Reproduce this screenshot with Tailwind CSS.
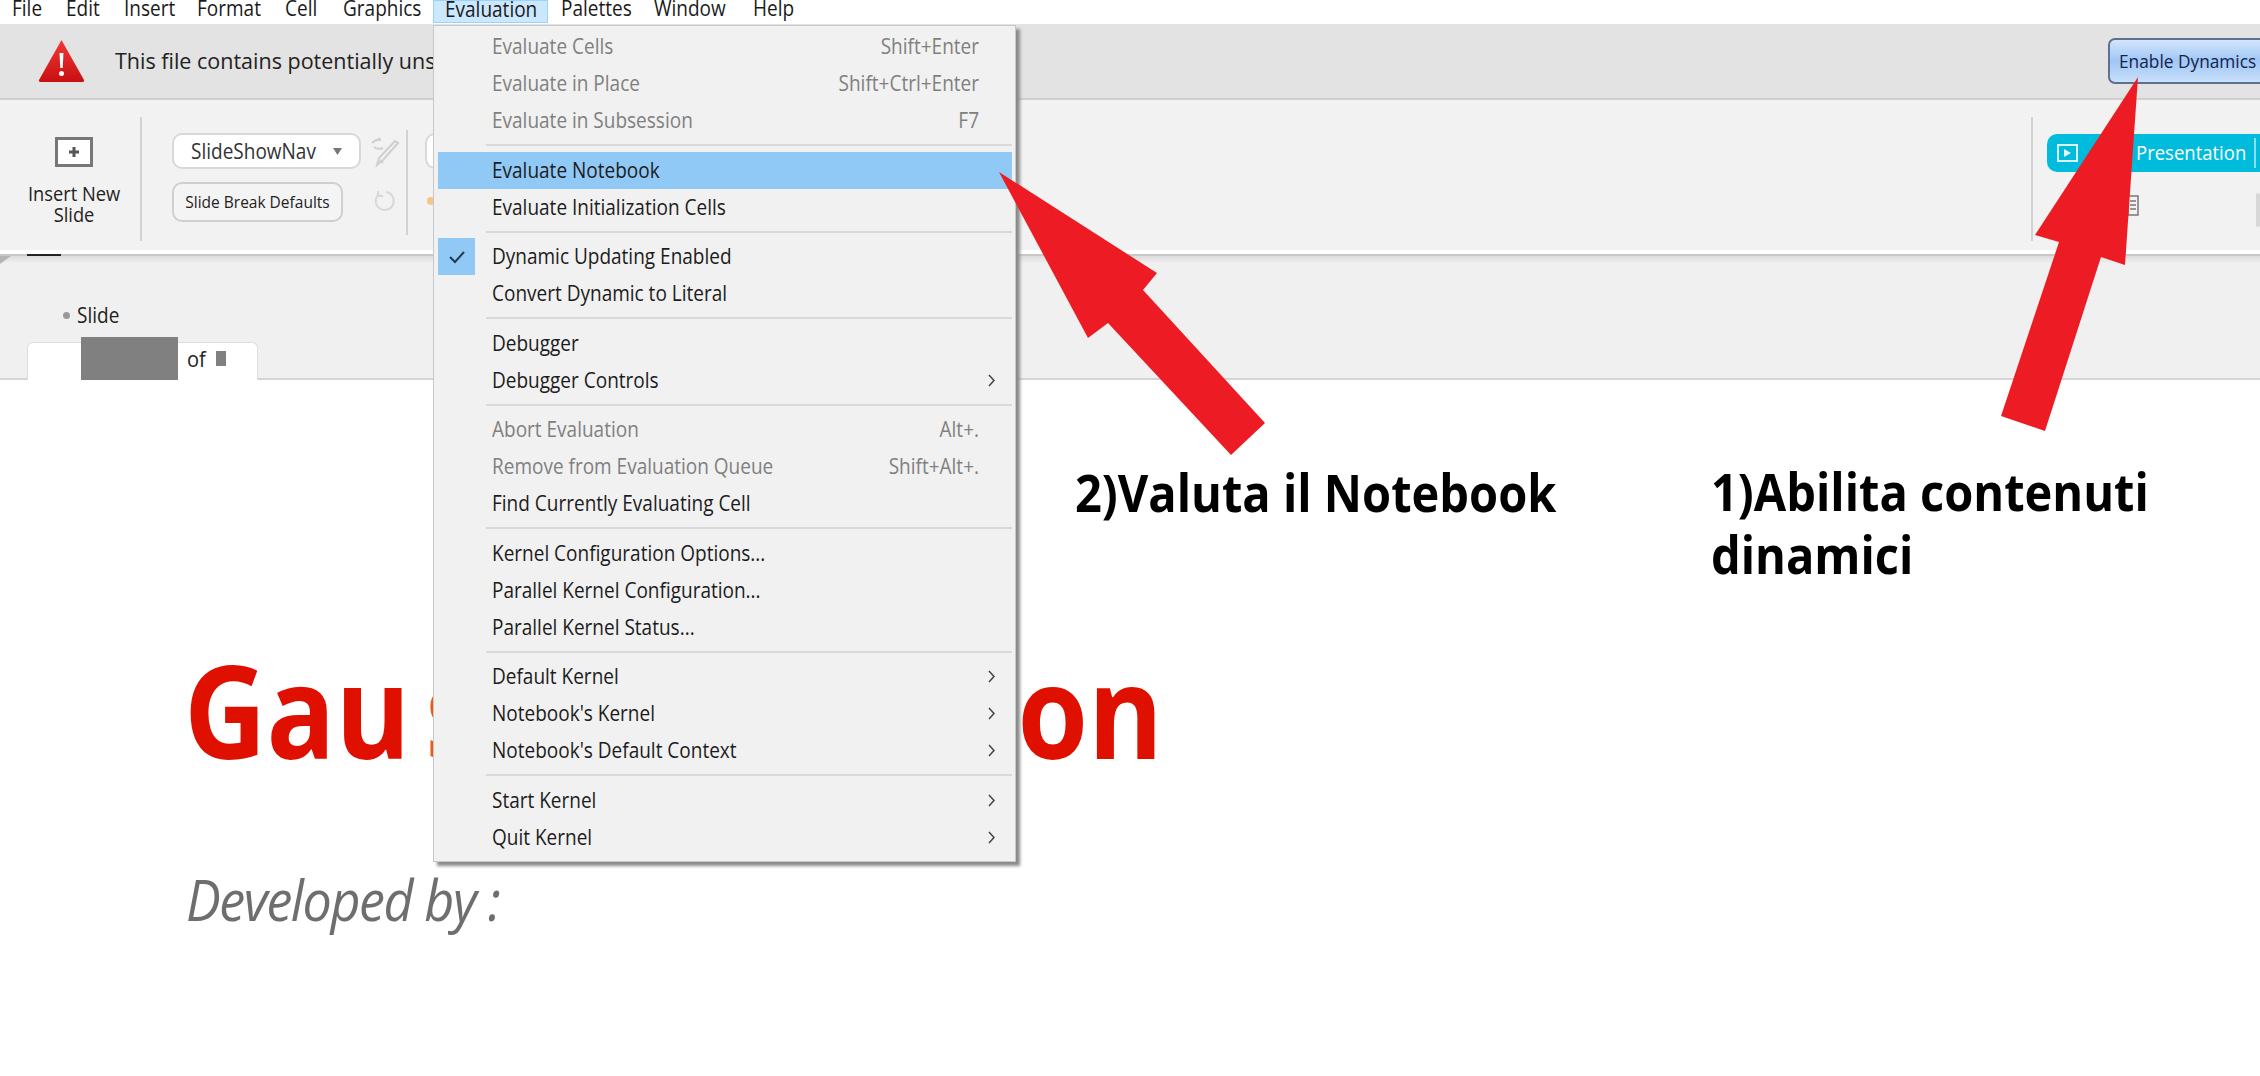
<!DOCTYPE html>
<html>
<head>
<meta charset="utf-8">
<script src="https://cdn.jsdelivr.net/npm/@tailwindcss/browser@4"></script>
</head>
<body class="bg-white">
<div class="relative w-[2260px] h-[1076px] overflow-hidden bg-white font-['Open_Sans',sans-serif] text-[#1a1a1a]">

  <!-- menu bar -->
  <div class="flex h-[24px] pl-[12px] overflow-hidden text-[19px] leading-none [&_span]:inline-block [&_span]:origin-bottom [&_span]:scale-y-[1.1]">
    <div class="w-[54px]"><span>File</span></div>
    <div class="w-[58px]"><span>Edit</span></div>
    <div class="w-[73px]"><span>Insert</span></div>
    <div class="w-[88px]"><span>Format</span></div>
    <div class="w-[58px]"><span>Cell</span></div>
    <div class="w-[90px]"><span>Graphics</span></div>
    <div class="w-[115px] h-[23px] pl-[11px] bg-[#cce8ff] border border-[#99d1ff]"><span>Evaluation</span></div>
    <div class="w-[106px] pl-[13px]"><span>Palettes</span></div>
    <div class="w-[99px]"><span>Window</span></div>
    <div><span>Help</span></div>
  </div>

  <!-- warning banner -->
  <div class="flex items-center h-[76px] pl-[38px] bg-[#e3e3e3] border-b-2 border-[#cfcfcf] overflow-hidden">
    <svg class="w-[47px] h-[44px] shrink-0" viewBox="0 0 47 44">
      <defs><linearGradient id="tri" x1="0" y1="0" x2="0" y2="1"><stop offset="0" stop-color="#f03a36"/><stop offset="1" stop-color="#c80f12"/></linearGradient></defs>
      <path d="M23.5 1 L46 41 Q46.5 43 44 43 L3 43 Q.5 43 1 41 Z" fill="url(#tri)"/>
      <path d="M21.5 14 h4 l-.8 15 h-2.4 Z" fill="#fff"/>
      <circle cx="23.5" cy="34.5" r="2.5" fill="#fff"/>
    </svg>
    <span class="ml-[30px] text-[21.5px] leading-none inline-block scale-y-[1.05] text-[#222]">This file contains potentially unsafe</span>
    <div class="ml-auto mr-[-20px] flex items-center w-[172px] h-[46px] pl-[9px] rounded-[7px] border-2 border-[#5f6f8f] bg-linear-to-b from-[#d3e6fc] via-[#9fc6f5] to-[#c9e0fa] shrink-0">
      <span class="text-[17.3px] leading-none whitespace-nowrap text-[#14234a] inline-block scale-y-[1.1]">Enable Dynamics</span>
    </div>
  </div>

  <!-- toolbar -->
  <div class="flex items-start h-[150px] bg-[#f2f2f2] overflow-hidden">
    <div class="w-[142px] mt-[17px] h-[124px] border-r-2 border-[#d2d2d2] flex flex-col items-center pl-[8px] shrink-0">
      <div class="mt-[20px] w-[38px] h-[30px] border-[3px] border-[#777] bg-white flex items-center justify-center">
        <svg class="w-[12px] h-[12px]" viewBox="0 0 12 12"><path d="M6 1v10M1 6h10" stroke="#555" stroke-width="3"/></svg>
      </div>
      <div class="mt-[15px] text-center text-[18.3px] leading-[21px] text-[#222] whitespace-nowrap [&_span]:inline-block [&_span]:scale-y-[1.1]"><span>Insert New</span><br><span>Slide</span></div>
    </div>
    <div class="ml-[30px] mt-[33px] flex flex-col shrink-0">
      <div class="flex items-center w-[189px] h-[36px] pl-[17px] bg-white border-2 border-[#d8d8d8] rounded-[10px]">
        <span class="text-[19px] leading-none text-[#333] inline-block scale-y-[1.1]">SlideShowNav</span>
        <svg class="ml-[17px] w-[9px] h-[7px]" viewBox="0 0 9 7"><path d="M0 0h9L4.500 7Z" fill="#777"/></svg>
      </div>
      <div class="flex items-center justify-center w-[171px] h-[40px] mt-[13px] bg-[#f4f4f4] border-2 border-[#cfcfcf] rounded-[10px]">
        <span class="text-[15.5px] leading-none text-[#222] whitespace-nowrap inline-block scale-y-[1.1]">Slide Break Defaults</span>
      </div>
    </div>
    <div class="ml-[9px] mt-[37px] w-[30px] flex flex-col items-center shrink-0">
      <svg class="w-[30px] h-[30px]" viewBox="0 0 30 30" fill="none" stroke="#cfcfcf" stroke-width="2"><path d="M28 6 L13 23 L7 28 L9 21 L25 4 Z"/><path d="M10 23 L13 26"/><path d="M2 6 q4-4 9-3 M11 3 l-3-2 M4 10 q4 3 9 1"/></svg>
      <svg class="mt-[23px] w-[22px] h-[22px]" viewBox="0 0 22 22" fill="none" stroke="#d8d8d8" stroke-width="2"><path d="M5 4 A9 9 0 1 0 12 2"/><path d="M4 1v5h5"/></svg>
    </div>
    <div class="ml-[6px] mt-[30px] h-[105px] w-[2px] bg-[#d2d2d2] shrink-0"></div>
    <div class="ml-[17px] mt-[33px] flex flex-col shrink-0">
      <div class="w-[60px] h-[36px] bg-white border-2 border-[#d8d8d8] rounded-[10px]"></div>
      <div class="ml-[2px] mt-[28px] w-[8px] h-[8px] rounded-full bg-[#f5c78a]"></div>
    </div>

    <div class="ml-auto mt-[17px] h-[124px] w-[2px] bg-[#d2d2d2] shrink-0"></div>
    <div class="ml-[14px] mt-[34px] w-[213px] shrink-0">
      <div class="flex items-center h-[38px] pl-[10px] bg-[#00bcdc] rounded-l-[10px]">
        <svg class="w-[21px] h-[18px] shrink-0" viewBox="0 0 21 18" fill="none"><rect x="1" y="1" width="19" height="16" stroke="#d8f4fa" stroke-width="2"/><path d="M7 5l7 4-7 4Z" fill="#e8f9fc"/></svg>
        <span class="ml-[58px] -translate-y-[1px] text-[18.5px] leading-none text-white inline-block scale-y-[1.1]">Presentation</span>
        <div class="ml-[8px] w-[2px] h-[30px] bg-[#8fdcec] shrink-0"></div>
      </div>
      <div class="flex items-start mt-[21px]">
        <svg class="ml-[80px] w-[12px] h-[23px] shrink-0" viewBox="0 0 12 23" fill="none" stroke="#777" stroke-width="1.500"><rect x="1" y="3" width="10" height="19"/><path d="M3 8h6M3 12h6M3 16h6"/></svg>
        <div class="ml-[117px] w-[20px] h-[34px] bg-white border-2 border-[#d8d8d8] rounded-[6px]"></div>
      </div>
    </div>
  </div>

  <!-- rule under toolbar -->
  <div class="h-[4px] bg-white"></div>
  <div class="relative h-[2px] bg-[#c8c8c8]"><div class="absolute left-[27px] top-0 w-[34px] h-[2px] bg-[#222]"></div></div>

  <!-- slide header -->
  <div class="relative h-[124px] bg-[#f0f0f0] border-b-2 border-[#d4d4d4] bg-linear-to-b from-[#dcdcdc] from-0% to-[#f0f0f0] to-[6%]">
    <svg class="absolute left-0 top-0 w-[11px] h-[8px]" viewBox="0 0 11 8"><path d="M0 0h11L0 8Z" fill="#b5b5b5"/></svg>
    <div class="flex items-center pt-[50px] pl-[63px]">
      <span class="w-[7px] h-[7px] rounded-full bg-[#999]"></span>
      <span class="ml-[7px] text-[19px] leading-[18px] text-[#222] inline-block scale-y-[1.1]">Slide</span>
    </div>
    <div class="absolute left-[27px] top-[86px] w-[231px] h-[38px] bg-white rounded-t-[6px] border-x border-t border-[#dedede]">
      <div class="absolute left-[53px] top-[-6px] w-[97px] h-[43px] bg-[#808080]"></div>
      <span class="absolute left-[159px] top-[5px] text-[20px] leading-[22px] text-[#222] inline-block scale-y-[1.1]">of</span>
      <div class="absolute left-[188px] top-[8px] w-[10px] h-[15px] bg-[#808080]"></div>
    </div>
  </div>

  <!-- document -->
  <div class="pl-[184px] pt-[273px]">
    <div class="flex justify-between w-[979px] text-[#e01000] text-[114px] leading-[130px] font-bold">
      <span class="inline-block scale-y-[1.14] origin-bottom">Gau<span class="ml-[15px] text-[#ee5a10]">s</span></span>
      <span class="inline-block scale-y-[1.14] origin-bottom">on</span>
    </div>
    <div class="mt-[86px] ml-[2px] text-[#6e6e6e] text-[52px] leading-[60px] italic tracking-[-1.4px]">
      <span class="inline-block scale-y-[1.1]">Developed by :</span>
    </div>
  </div>

  <!-- Evaluation menu -->
  <div class="absolute left-[433px] top-[25px] w-[583px] h-[837px] pt-[2px] pl-[4px] pr-[3px] bg-[#f1f1f1] border border-[#c8c8c8] shadow-[4px_4px_3px_#8a8a8a] text-[19px] leading-none text-[#1c1c1c] [&_span]:inline-block [&_span]:scale-y-[1.1]">
    <div class="flex items-center justify-between h-[37px] pl-[54px] pr-[33px] text-[#808080]"><span>Evaluate Cells</span><span>Shift+Enter</span></div>
    <div class="flex items-center justify-between h-[37px] pl-[54px] pr-[33px] text-[#808080]"><span>Evaluate in Place</span><span>Shift+Ctrl+Enter</span></div>
    <div class="flex items-center justify-between h-[37px] pl-[54px] pr-[33px] text-[#808080]"><span>Evaluate in Subsession</span><span>F7</span></div>
    <div class="h-[13px] pl-[48px] pt-[5px]"><div class="h-[2px] bg-[#d9d9d9]"></div></div>
    <div class="flex items-center h-[37px] pl-[54px] bg-[#90c8f6]"><span>Evaluate Notebook</span></div>
    <div class="flex items-center h-[37px] pl-[54px]"><span>Evaluate Initialization Cells</span></div>
    <div class="h-[12px] pl-[48px] pt-[5px]"><div class="h-[2px] bg-[#d9d9d9]"></div></div>
    <div class="relative flex items-center h-[37px] pl-[54px]">
      <div class="absolute left-0 top-0 w-[37px] h-[37px] bg-[#90c8f6] flex items-center justify-center"><svg class="w-[16px] h-[14px]" viewBox="0 0 16 14" fill="none"><path d="M1 7l5 5L15 2" stroke="#1f3a52" stroke-width="2"/></svg></div>
      <span>Dynamic Updating Enabled</span>
    </div>
    <div class="flex items-center h-[37px] pl-[54px]"><span>Convert Dynamic to Literal</span></div>
    <div class="h-[13px] pl-[48px] pt-[5px]"><div class="h-[2px] bg-[#d9d9d9]"></div></div>
    <div class="flex items-center h-[37px] pl-[54px]"><span>Debugger</span></div>
    <div class="flex items-center justify-between h-[37px] pl-[54px] pr-[17px]"><span>Debugger Controls</span><svg class="w-[7px] h-[13px]" viewBox="0 0 7 13" fill="none"><path d="M1 1l5 5.500-5 5.500" stroke="#444" stroke-width="1.500"/></svg></div>
    <div class="h-[12px] pl-[48px] pt-[5px]"><div class="h-[2px] bg-[#d9d9d9]"></div></div>
    <div class="flex items-center justify-between h-[37px] pl-[54px] pr-[33px] text-[#808080]"><span>Abort Evaluation</span><span>Alt+.</span></div>
    <div class="flex items-center justify-between h-[37px] pl-[54px] pr-[33px] text-[#808080]"><span>Remove from Evaluation Queue</span><span>Shift+Alt+.</span></div>
    <div class="flex items-center h-[37px] pl-[54px]"><span>Find Currently Evaluating Cell</span></div>
    <div class="h-[13px] pl-[48px] pt-[5px]"><div class="h-[2px] bg-[#d9d9d9]"></div></div>
    <div class="flex items-center h-[37px] pl-[54px]"><span>Kernel Configuration Options...</span></div>
    <div class="flex items-center h-[37px] pl-[54px]"><span>Parallel Kernel Configuration...</span></div>
    <div class="flex items-center h-[37px] pl-[54px]"><span>Parallel Kernel Status...</span></div>
    <div class="h-[12px] pl-[48px] pt-[5px]"><div class="h-[2px] bg-[#d9d9d9]"></div></div>
    <div class="flex items-center justify-between h-[37px] pl-[54px] pr-[17px]"><span>Default Kernel</span><svg class="w-[7px] h-[13px]" viewBox="0 0 7 13" fill="none"><path d="M1 1l5 5.500-5 5.500" stroke="#444" stroke-width="1.500"/></svg></div>
    <div class="flex items-center justify-between h-[37px] pl-[54px] pr-[17px]"><span>Notebook's Kernel</span><svg class="w-[7px] h-[13px]" viewBox="0 0 7 13" fill="none"><path d="M1 1l5 5.500-5 5.500" stroke="#444" stroke-width="1.500"/></svg></div>
    <div class="flex items-center justify-between h-[37px] pl-[54px] pr-[17px]"><span>Notebook's Default Context</span><svg class="w-[7px] h-[13px]" viewBox="0 0 7 13" fill="none"><path d="M1 1l5 5.500-5 5.500" stroke="#444" stroke-width="1.500"/></svg></div>
    <div class="h-[13px] pl-[48px] pt-[5px]"><div class="h-[2px] bg-[#d9d9d9]"></div></div>
    <div class="flex items-center justify-between h-[37px] pl-[54px] pr-[17px]"><span>Start Kernel</span><svg class="w-[7px] h-[13px]" viewBox="0 0 7 13" fill="none"><path d="M1 1l5 5.500-5 5.500" stroke="#444" stroke-width="1.500"/></svg></div>
    <div class="flex items-center justify-between h-[37px] pl-[54px] pr-[17px]"><span>Quit Kernel</span><svg class="w-[7px] h-[13px]" viewBox="0 0 7 13" fill="none"><path d="M1 1l5 5.500-5 5.500" stroke="#444" stroke-width="1.500"/></svg></div>
  </div>

  <!-- annotation arrows -->
  <svg class="absolute left-0 top-0 w-[2260px] h-[1076px] pointer-events-none" viewBox="0 0 2260 1076">
    <polygon fill="#ed1c24" points="999,172 1157,273 1143,290 1265,423 1231,455 1108,323 1088,338"/>
    <polygon fill="#ed1c24" points="2138,77 2125,265 2101,257 2045,431 2001,416 2059,242 2035,235"/>
  </svg>

  <!-- annotation captions -->
  <div class="absolute left-[1075px] top-[464px] text-[47px] leading-[56px] font-bold text-black"><span class="inline-block scale-y-[1.1]">2)Valuta il Notebook</span></div>
  <div class="absolute left-[1711px] top-[460px] text-[47px] leading-[63px] font-bold text-black [&_span]:inline-block [&_span]:scale-y-[1.1]"><span>1)Abilita contenuti</span><br><span>dinamici</span></div>
</div>
</body>
</html>
